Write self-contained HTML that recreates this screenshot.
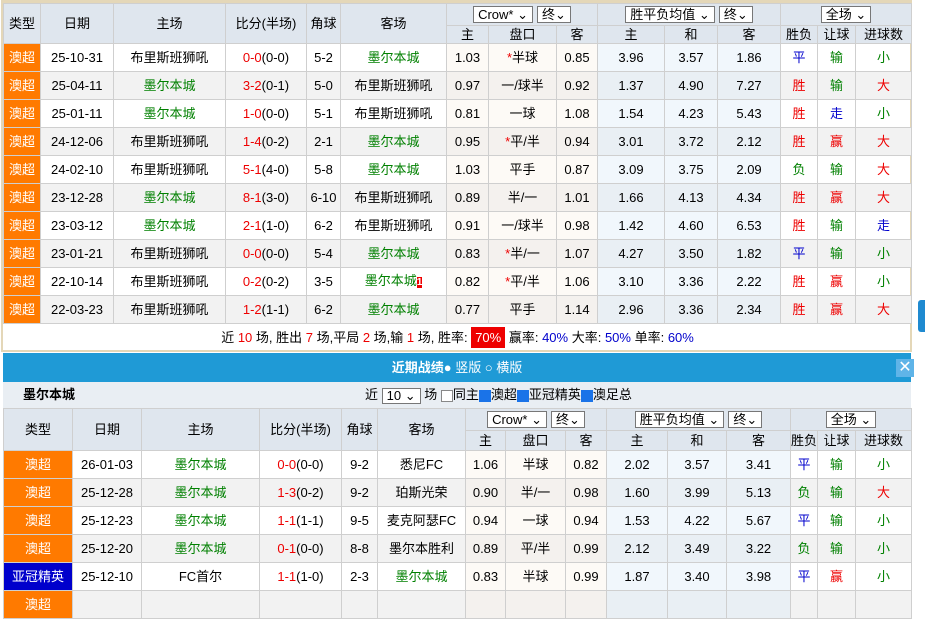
<!DOCTYPE html>
<html><head><meta charset="utf-8"><style>
*{box-sizing:border-box;margin:0;padding:0}
body{width:925px;height:597px;overflow:hidden;background:#fff;font-family:"Liberation Sans","Noto Sans CJK SC",sans-serif;font-size:13px;color:#000;position:relative}
table{border-collapse:collapse;table-layout:fixed;position:absolute}
td{border:1px solid #cfcfcf;text-align:center;height:28px;padding:0;white-space:nowrap;overflow:hidden;line-height:16px}
.h td{background:#dfe6ee;height:auto;line-height:14px}
.h td div{display:flex;align-items:center;justify-content:center;overflow:hidden;gap:4px}
.a{height:21px}.c{height:17px}.d{height:19px}
.t{background:#ff7a00;color:#fff}
.tb{background:#0000cc;color:#fff}
.g{color:#008000}.r{color:#e00}.b{color:#00c}
.e td{background:#f2f2f2}
td.o{background:#fdfaf6}td.p{background:#f1f7fc}
.e td.o{background:#f4f1ee}.e td.p{background:#e9eff4}
.e td.t{background:#ff7a00}.e td.tb{background:#0000cc}
.sel{display:inline-block;border:1px solid #777;background:#fff;height:17px;line-height:15px;padding:0 4px;font-size:13px}
.star{color:#e00}
#frame{position:absolute;left:1px;top:0;width:911px;height:352px;border:2px solid #e4d7b8;border-top-width:3px}
#blue{position:absolute;left:3px;top:353px;width:908px;height:29px;background:#1f9ad6;color:#fff;text-align:center;line-height:29px;font-size:13px;font-weight:bold}
#x{position:absolute;right:11px;top:359px;width:18px;height:18px;background:#5fb4e8;color:#fff;text-align:center;line-height:18px;font-size:16px}
#team{position:absolute;left:3px;top:382px;width:908px;height:26px;background:#e9eef3;line-height:26px}
.cb{display:inline-block;width:12px;height:12px;border:1px solid #888;vertical-align:middle;background:#fff}
.cb.on{background:#1a73e8;border-color:#1a73e8}
</style></head><body>
<div id="frame"></div>
<table style="left:3px;top:3px;width:908px">
<colgroup><col width="37"><col width="73"><col width="112"><col width="81"><col width="34"><col width="106"><col width="42"><col width="68"><col width="41"><col width="67"><col width="53"><col width="63"><col width="37"><col width="38"><col width="56"></colgroup>
<tr class="h"><td rowspan="2">类型</td><td rowspan="2">日期</td><td rowspan="2">主场</td><td rowspan="2">比分(半场)</td><td rowspan="2">角球</td><td rowspan="2">客场</td><td colspan="3"><div class="a"><span class="sel">Crow* ⌄</span><span class="sel">终⌄</span></div></td><td colspan="3"><div class="a"><span class="sel">胜平负均值 ⌄</span><span class="sel">终⌄</span></div></td><td colspan="3"><div class="a"><span class="sel">全场 ⌄</span></div></td></tr>
<tr class="h"><td><div class="c">主</div></td><td><div class="c">盘口</div></td><td><div class="c">客</div></td><td><div class="c">主</div></td><td><div class="c">和</div></td><td><div class="c">客</div></td><td><div class="c">胜负</div></td><td><div class="c">让球</div></td><td><div class="c">进球数</div></td></tr>
<tr><td class="t">澳超</td><td>25-10-31</td><td>布里斯班狮吼</td><td><span class="r">0-0</span>(0-0)</td><td>5-2</td><td class="g">墨尔本城</td><td class="o">1.03</td><td class="o"><span class="star">*</span>半球</td><td class="o">0.85</td><td class="p">3.96</td><td class="p">3.57</td><td class="p">1.86</td><td class="b">平</td><td class="g">输</td><td class="g">小</td></tr>
<tr class="e"><td class="t">澳超</td><td>25-04-11</td><td class="g">墨尔本城</td><td><span class="r">3-2</span>(0-1)</td><td>5-0</td><td>布里斯班狮吼</td><td class="o">0.97</td><td class="o">一/球半</td><td class="o">0.92</td><td class="p">1.37</td><td class="p">4.90</td><td class="p">7.27</td><td class="r">胜</td><td class="g">输</td><td class="r">大</td></tr>
<tr><td class="t">澳超</td><td>25-01-11</td><td class="g">墨尔本城</td><td><span class="r">1-0</span>(0-0)</td><td>5-1</td><td>布里斯班狮吼</td><td class="o">0.81</td><td class="o">一球</td><td class="o">1.08</td><td class="p">1.54</td><td class="p">4.23</td><td class="p">5.43</td><td class="r">胜</td><td class="b">走</td><td class="g">小</td></tr>
<tr class="e"><td class="t">澳超</td><td>24-12-06</td><td>布里斯班狮吼</td><td><span class="r">1-4</span>(0-2)</td><td>2-1</td><td class="g">墨尔本城</td><td class="o">0.95</td><td class="o"><span class="star">*</span>平/半</td><td class="o">0.94</td><td class="p">3.01</td><td class="p">3.72</td><td class="p">2.12</td><td class="r">胜</td><td class="r">赢</td><td class="r">大</td></tr>
<tr><td class="t">澳超</td><td>24-02-10</td><td>布里斯班狮吼</td><td><span class="r">5-1</span>(4-0)</td><td>5-8</td><td class="g">墨尔本城</td><td class="o">1.03</td><td class="o">平手</td><td class="o">0.87</td><td class="p">3.09</td><td class="p">3.75</td><td class="p">2.09</td><td class="g">负</td><td class="g">输</td><td class="r">大</td></tr>
<tr class="e"><td class="t">澳超</td><td>23-12-28</td><td class="g">墨尔本城</td><td><span class="r">8-1</span>(3-0)</td><td>6-10</td><td>布里斯班狮吼</td><td class="o">0.89</td><td class="o">半/一</td><td class="o">1.01</td><td class="p">1.66</td><td class="p">4.13</td><td class="p">4.34</td><td class="r">胜</td><td class="r">赢</td><td class="r">大</td></tr>
<tr><td class="t">澳超</td><td>23-03-12</td><td class="g">墨尔本城</td><td><span class="r">2-1</span>(1-0)</td><td>6-2</td><td>布里斯班狮吼</td><td class="o">0.91</td><td class="o">一/球半</td><td class="o">0.98</td><td class="p">1.42</td><td class="p">4.60</td><td class="p">6.53</td><td class="r">胜</td><td class="g">输</td><td class="b">走</td></tr>
<tr class="e"><td class="t">澳超</td><td>23-01-21</td><td>布里斯班狮吼</td><td><span class="r">0-0</span>(0-0)</td><td>5-4</td><td class="g">墨尔本城</td><td class="o">0.83</td><td class="o"><span class="star">*</span>半/一</td><td class="o">1.07</td><td class="p">4.27</td><td class="p">3.50</td><td class="p">1.82</td><td class="b">平</td><td class="g">输</td><td class="g">小</td></tr>
<tr><td class="t">澳超</td><td>22-10-14</td><td>布里斯班狮吼</td><td><span class="r">0-2</span>(0-2)</td><td>3-5</td><td class="g">墨尔本城<span style="background:#e00;color:#fff;font-size:10px;font-weight:bold">1</span></td><td class="o">0.82</td><td class="o"><span class="star">*</span>平/半</td><td class="o">1.06</td><td class="p">3.10</td><td class="p">3.36</td><td class="p">2.22</td><td class="r">胜</td><td class="r">赢</td><td class="g">小</td></tr>
<tr class="e"><td class="t">澳超</td><td>22-03-23</td><td>布里斯班狮吼</td><td><span class="r">1-2</span>(1-1)</td><td>6-2</td><td class="g">墨尔本城</td><td class="o">0.77</td><td class="o">平手</td><td class="o">1.14</td><td class="p">2.96</td><td class="p">3.36</td><td class="p">2.34</td><td class="r">胜</td><td class="r">赢</td><td class="r">大</td></tr>
<tr><td colspan="15" style="border:none;height:28px">近 <span class="r">10</span> 场, 胜出 <span class="r">7</span> 场,平局 <span class="r">2</span> 场,输 <span class="r">1</span> 场, 胜率: <span style="background:#e00;color:#fff;padding:3px 4px">70%</span> 赢率: <span class="b">40%</span> 大率: <span class="b">50%</span> 单率: <span class="b">60%</span></td></tr>
</table>
<div style="position:absolute;left:918px;top:300px;width:7px;height:32px;background:#1f8ad0;border-radius:3px 0 0 3px"></div>
<div id="blue">近期战绩<span style="font-weight:normal">● 竖版 ○ 横版</span></div>
<div id="x">✕</div>
<div id="team"><b style="position:absolute;left:20px">墨尔本城</b><span style="position:absolute;left:362px">近 <span class="sel" style="height:16px;line-height:14px;vertical-align:middle">10 ⌄</span> 场 <span class="cb"></span>同主<span class="cb on"></span>澳超<span class="cb on"></span>亚冠精英<span class="cb on"></span>澳足总</span></div>
<table style="left:3px;top:408px;width:908px">
<colgroup><col width="69"><col width="69"><col width="118"><col width="82"><col width="36"><col width="88"><col width="40"><col width="60"><col width="41"><col width="61"><col width="59"><col width="64"><col width="27"><col width="38"><col width="56"></colgroup>
<tr class="h"><td rowspan="2">类型</td><td rowspan="2">日期</td><td rowspan="2">主场</td><td rowspan="2">比分(半场)</td><td rowspan="2">角球</td><td rowspan="2">客场</td><td colspan="3"><div class="a"><span class="sel">Crow* ⌄</span><span class="sel">终⌄</span></div></td><td colspan="3"><div class="a"><span class="sel">胜平负均值 ⌄</span><span class="sel">终⌄</span></div></td><td colspan="3"><div class="a"><span class="sel">全场 ⌄</span></div></td></tr>
<tr class="h"><td><div class="d">主</div></td><td><div class="d">盘口</div></td><td><div class="d">客</div></td><td><div class="d">主</div></td><td><div class="d">和</div></td><td><div class="d">客</div></td><td><div class="d">胜负</div></td><td><div class="d">让球</div></td><td><div class="d">进球数</div></td></tr>
<tr><td class="t">澳超</td><td>26-01-03</td><td class="g">墨尔本城</td><td><span class="r">0-0</span>(0-0)</td><td>9-2</td><td>悉尼FC</td><td class="o">1.06</td><td class="o">半球</td><td class="o">0.82</td><td class="p">2.02</td><td class="p">3.57</td><td class="p">3.41</td><td class="b">平</td><td class="g">输</td><td class="g">小</td></tr>
<tr class="e"><td class="t">澳超</td><td>25-12-28</td><td class="g">墨尔本城</td><td><span class="r">1-3</span>(0-2)</td><td>9-2</td><td>珀斯光荣</td><td class="o">0.90</td><td class="o">半/一</td><td class="o">0.98</td><td class="p">1.60</td><td class="p">3.99</td><td class="p">5.13</td><td class="g">负</td><td class="g">输</td><td class="r">大</td></tr>
<tr><td class="t">澳超</td><td>25-12-23</td><td class="g">墨尔本城</td><td><span class="r">1-1</span>(1-1)</td><td>9-5</td><td>麦克阿瑟FC</td><td class="o">0.94</td><td class="o">一球</td><td class="o">0.94</td><td class="p">1.53</td><td class="p">4.22</td><td class="p">5.67</td><td class="b">平</td><td class="g">输</td><td class="g">小</td></tr>
<tr class="e"><td class="t">澳超</td><td>25-12-20</td><td class="g">墨尔本城</td><td><span class="r">0-1</span>(0-0)</td><td>8-8</td><td>墨尔本胜利</td><td class="o">0.89</td><td class="o">平/半</td><td class="o">0.99</td><td class="p">2.12</td><td class="p">3.49</td><td class="p">3.22</td><td class="g">负</td><td class="g">输</td><td class="g">小</td></tr>
<tr><td class="tb">亚冠精英</td><td>25-12-10</td><td>FC首尔</td><td><span class="r">1-1</span>(1-0)</td><td>2-3</td><td class="g">墨尔本城</td><td class="o">0.83</td><td class="o">半球</td><td class="o">0.99</td><td class="p">1.87</td><td class="p">3.40</td><td class="p">3.98</td><td class="b">平</td><td class="r">赢</td><td class="g">小</td></tr>
<tr class="e"><td class="t">澳超</td><td></td><td></td><td></td><td></td><td></td><td class="o"></td><td class="o"></td><td class="o"></td><td class="p"></td><td class="p"></td><td class="p"></td><td></td><td></td><td></td></tr>
</table>
</body></html>
